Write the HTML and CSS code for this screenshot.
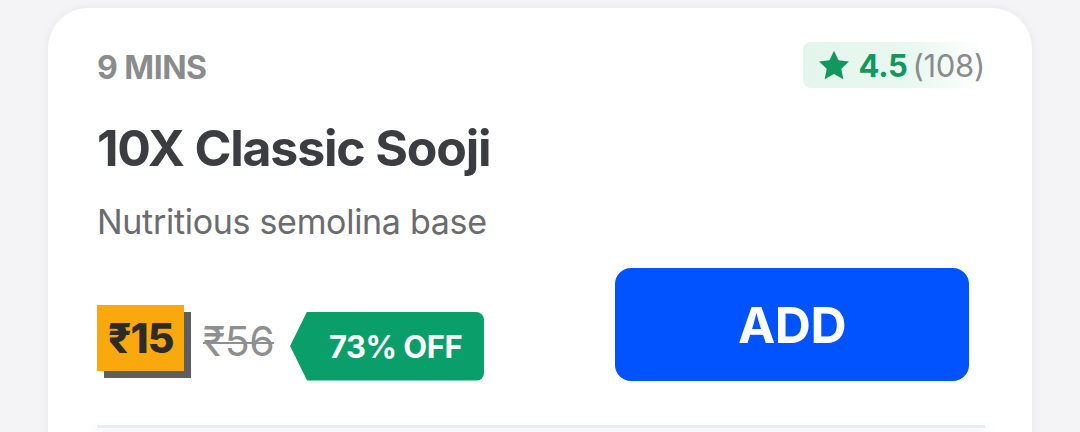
FILE: index.html
```html
<!DOCTYPE html>
<html>
<head>
<meta charset="utf-8">
<link rel="stylesheet" href="styles.css">
</head>
<body>
<div class="page">
  <div class="card">
    <div class="top-row">
      <div class="eta">9 MINS</div>
      <div class="rating">
        <svg class="star" viewBox="0 0 24 24" width="36" height="35"><path d="M12 1.8l3.1 6.6 7.2.9-5.3 5 1.4 7.1L12 17.9l-6.4 3.5 1.4-7.1-5.3-5 7.2-.9z" fill="#12975f"/></svg>
        <span class="score">4.5</span>
        <span class="count">(108)</span>
      </div>
    </div>
    <h1 class="title">10X Classic Sooji</h1>
    <p class="desc">Nutritious semolina base</p>
    <div class="bottom-row">
      <div class="prices">
        <div class="price-box"><span class="price">₹15</span></div>
        <span class="mrp">₹56</span>
        <div class="off-tag">73% OFF</div>
      </div>
      <button class="add-btn">ADD</button>
    </div>
    <div class="divider"></div>
  </div>
</div>
</body>
</html>
```
FILE: styles.css
```css
* { box-sizing: border-box; }
html, body { margin: 0; padding: 0; }
body {
  background: #f4f4f6;
  font-family: "Inter", "Noto Sans", sans-serif;
  width: 1080px;
  height: 432px;
  overflow: hidden;
}
.page {
  padding: 8px 48px 0 48px;
}
.card {
  background: #ffffff;
  border-radius: 40px 40px 0 0;
  box-shadow: 0 0 8px rgba(0, 0, 0, 0.06);
  height: 440px;
  padding: 40px 47px 0 49px;
}
.top-row {
  display: flex;
  justify-content: space-between;
  align-items: flex-start;
}
.eta {
  font-size: 32px;
  font-weight: 700;
  color: #8a8b8d;
  line-height: 40px;
  letter-spacing: -0.5px;
}
.rating {
  display: flex;
  align-items: center;
  gap: 7px;
  margin-top: -6px;
  height: 46px;
  padding: 0 0 0 13px;
  border-radius: 8px;
  background: linear-gradient(90deg, #e3f6ec 0%, #e9f8f0 60%, rgba(240, 250, 245, 0) 100%);
}
.star { display: block; margin-right: 0; }
.score {
  font-size: 31px;
  font-weight: 700;
  color: #12975f;
  letter-spacing: -0.3px;
}
.count {
  font-size: 31px;
  font-weight: 400;
  color: #8a8b8d;
  letter-spacing: -0.3px;
  margin-left: -2px;
}
.title {
  margin: 30px 0 0 0;
  font-size: 50px;
  font-weight: 700;
  color: #3b3d40;
  line-height: 60px;
  letter-spacing: -1.2px;
}
.desc {
  margin: 24px 0 0 0;
  font-size: 34px;
  font-weight: 400;
  color: #6a6b6e;
  line-height: 40px;
  letter-spacing: -0.3px;
}
.bottom-row {
  display: flex;
  justify-content: space-between;
  align-items: center;
  margin-top: 26px;
  padding-right: 16px;
}
.prices {
  display: flex;
  align-items: center;
  padding-top: 32px;
}
.price-box {
  position: relative;
  background: #f9a90b;
  width: 87px;
  height: 66px;
  display: flex;
  align-items: center;
  justify-content: center;
  box-shadow: 7px 7px 0 #5e5e60;
  margin-top: -6px;
}
.price {
  font-size: 41px;
  font-weight: 800;
  color: #2e2a26;
  letter-spacing: -1px;
}
.mrp {
  margin-left: 19px;
  font-size: 41px;
  font-weight: 400;
  color: #8e8f91;
  text-decoration: line-through;
  text-decoration-thickness: 2px;
  letter-spacing: -0.5px;
}
.off-tag {
  margin-left: 16px;
  width: 194px;
  height: 69px;
  background: #0a9e6b;
  color: #ffffff;
  font-size: 31px;
  font-weight: 700;
  display: flex;
  align-items: center;
  justify-content: center;
  padding-left: 17px;
  border-radius: 8px;
  clip-path: polygon(17px 0, 100% 0, 100% 100%, 17px 100%, 0 50%);
  letter-spacing: -0.5px;
  margin-top: 11px;
}
.add-btn {
  width: 354px;
  height: 113px;
  background: #0053ff;
  border: none;
  border-radius: 16px;
  color: #ffffff;
  font-family: "Inter", "Noto Sans", sans-serif;
  font-size: 50px;
  font-weight: 700;
  letter-spacing: -0.5px;
}
.divider {
  margin-top: 44px;
  height: 3px;
  background: #ececee;
  box-shadow: 0 6px 10px rgba(180, 200, 245, 0.5);
}
```
